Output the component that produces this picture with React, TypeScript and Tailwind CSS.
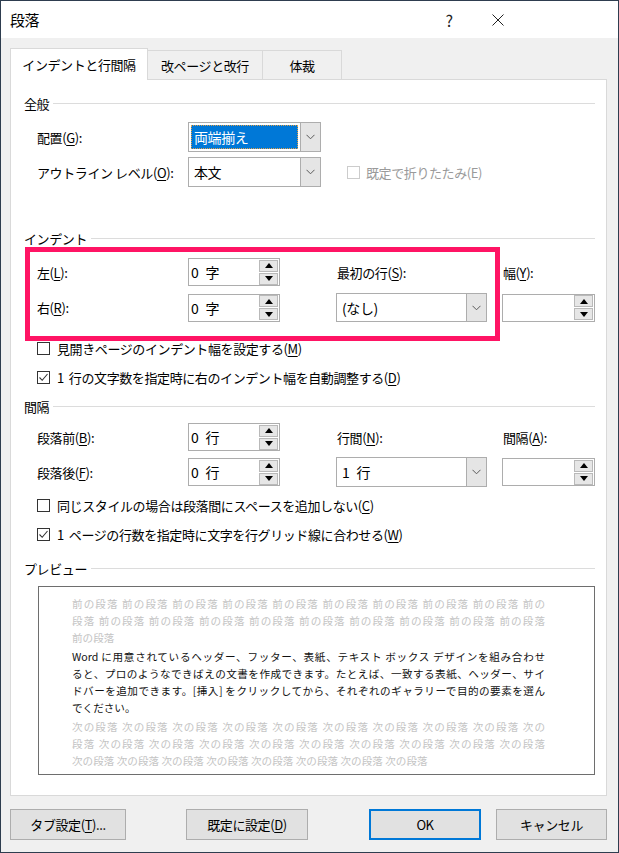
import React from "react";

const U = ({ c }: { c: string }) => (
  <span className="underline underline-offset-[2px] decoration-[1px]">{c}</span>
);

function Chevron() {
  return (
    <svg width="9" height="6" viewBox="0 0 9 6" className="block">
      <polyline points="0.5,0.8 4.5,4.8 8.5,0.8" fill="none" stroke="#5a5a5a" strokeWidth="1" />
    </svg>
  );
}

function Select({
  className,
  text,
  selected,
}: {
  className: string;
  text: React.ReactNode;
  selected?: boolean;
}) {
  return (
    <div className={"flex border border-[#adadad] bg-white " + className}>
      <div className="flex-1 flex p-[2px]">
        {selected ? (
          <div className="flex-1 flex items-center bg-[#0078d7] border border-dotted border-[#e2a04a] text-white text-[14px] pl-[2px]">
            {text}
          </div>
        ) : (
          <div className="flex-1 flex items-center text-[14px] pl-[3px]">{text}</div>
        )}
      </div>
      <div className="w-[20px] bg-[#e5e5e5] border-l border-[#adadad] flex items-center justify-center">
        <Chevron />
      </div>
    </div>
  );
}

function Tri({ up }: { up?: boolean }) {
  return (
    <svg width="8" height="5" viewBox="0 0 8 5" className="block">
      {up ? <polygon points="4,0 8,5 0,5" fill="#000" /> : <polygon points="0,0 8,0 4,5" fill="#000" />}
    </svg>
  );
}

function Spin({ className, num, unit }: { className: string; num?: string; unit?: string }) {
  return (
    <div className={"flex items-center border border-[#adadad] bg-white h-[28px] " + className}>
      <span className="flex-1 flex items-center gap-[7px] pl-[2px] text-[14px]">
        {num && <span>{num}</span>}
        {unit && <span>{unit}</span>}
      </span>
      <div className="flex flex-col gap-[1px] mr-[1px] w-[19px]">
        <div className="h-[12px] bg-[#e6e6e6] border border-[#b9b9b9] flex items-center justify-center">
          <Tri up />
        </div>
        <div className="h-[12px] bg-[#e6e6e6] border border-[#b9b9b9] flex items-center justify-center">
          <Tri />
        </div>
      </div>
    </div>
  );
}

function Check({
  checked,
  disabled,
  children,
  className,
}: {
  checked?: boolean;
  disabled?: boolean;
  children: React.ReactNode;
  className: string;
}) {
  return (
    <div className={"flex items-center h-[22px] pl-[26px] " + className}>
      <div
        className={
          disabled
            ? "w-[13px] h-[13px] border border-[#cccccc] bg-white"
            : "w-[13px] h-[13px] border border-[#333333] bg-white flex items-center justify-center"
        }
      >
        {checked && (
          <svg width="11" height="11" viewBox="0 0 11 11" className="block">
            <polyline points="1.5,5.5 4.2,8.3 9.5,2" fill="none" stroke="#333" strokeWidth="1.1" />
          </svg>
        )}
      </div>
      <span className={disabled ? "ml-[6px] text-[#9a9a9a]" : "ml-[7px]"}>{children}</span>
    </div>
  );
}

function Header({ title, className }: { title: string; className: string }) {
  return (
    <div className={"flex items-center h-[20px] pl-[13px] pr-[11px] " + className}>
      <span>{title}</span>
      <div className="flex-1 h-px bg-[#dcdcdc] ml-[4px]" />
    </div>
  );
}

const grayLine = "text-[#c4c4c4] whitespace-nowrap text-justify [text-align-last:justify]";
const mainLine = "text-[#111] whitespace-nowrap text-justify [text-align-last:justify]";

export default function App() {
  return (
    <div className="w-[619px] h-[853px] bg-[#f0f0f0] border border-[#2e3d4f] flex flex-col font-['Noto_Sans_CJK_JP','Noto_Sans',sans-serif] text-black text-[13px] leading-none overflow-hidden tracking-[-0.4px]">
      {/* Title bar */}
      <div className="h-[37px] bg-white flex items-center shrink-0">
        <span className="ml-[9px] text-[15px]">段落</span>
        <div className="ml-auto w-[46px] flex justify-center text-[16px] text-[#222]">?</div>
        <div className="ml-[3px] w-[46px] flex justify-center">
          <svg width="12" height="12" viewBox="0 0 12 12" className="block">
            <path d="M0.5 0.5 L11.5 11.5 M11.5 0.5 L0.5 11.5" stroke="#222" strokeWidth="1" />
          </svg>
        </div>
        <div className="w-[97px]" />
      </div>

      {/* Tabs */}
      <div className="flex items-end h-[31px] mt-[10px] ml-[9px] relative z-10">
        <div className="w-[138px] h-[32px] -mb-px bg-white border border-[#d9d9d9] border-b-0 flex items-center justify-center">
          インデントと行間隔
        </div>
        <div className="w-[115px] h-[29px] border border-l-0 border-b-0 border-[#d9d9d9] flex items-center justify-center">
          改ページと改行
        </div>
        <div className="w-[79px] h-[29px] border border-l-0 border-b-0 border-[#d9d9d9] flex items-center justify-center">
          体裁
        </div>
      </div>

      {/* Panel */}
      <div className="ml-[9px] w-[597px] h-[717px] border border-[#d9d9d9] bg-white flex flex-col">
        <Header title="全般" className="mt-[13px]" />
        <div className="flex items-center h-[30px] mt-[9px] pl-[26px]">
          <span className="w-[151px]">
            配置(<U c="G" />):
          </span>
          <Select className="w-[133px] h-[30px]" text="両端揃え" selected />
        </div>
        <div className="flex items-center h-[30px] mt-[5px] pl-[26px]">
          <span className="w-[151px]">
            アウトライン レベル(<U c="O" />):
          </span>
          <Select className="w-[133px] h-[30px]" text="本文" />
          <Check disabled className="pl-[15px]">
            既定で折りたたみ(E)
          </Check>
        </div>

        {/* Indent */}
        <div className="relative flex flex-col mt-[41px]">
          <Header title="インデント" className="" />
          <div className="flex items-center h-[28px] mt-[10px] pl-[26px]">
            <span className="w-[151px]">
              左(<U c="L" />):
            </span>
            <Spin className="w-[92px]" num="0" unit="字" />
            <span className="ml-[57px] w-[166px]">
              最初の行(<U c="S" />):
            </span>
            <span>
              幅(<U c="Y" />):
            </span>
          </div>
          <div className="flex items-center h-[29px] mt-[7px] pl-[26px]">
            <span className="w-[151px]">
              右(<U c="R" />):
            </span>
            <Spin className="w-[92px]" num="0" unit="字" />
            <Select className="ml-[56px] w-[151px] h-[29px]" text="(なし)" />
            <Spin className="ml-[15px] w-[93px]" />
          </div>
          <div className="absolute left-[14px] top-[19px] w-[475px] h-[94px] border-[5px] border-[#ff1464] pointer-events-none" />
        </div>
        <Check className="mt-[15px]">
          見開きページのインデント幅を設定する(<U c="M" />)
        </Check>
        <Check checked className="mt-[7px]">
          <span className="mr-[5px]">1</span>行の文字数を指定時に右のインデント幅を自動調整する(<U c="D" />)
        </Check>

        {/* Spacing */}
        <Header title="間隔" className="mt-[8px]" />
        <div className="flex items-center h-[28px] mt-[7px] pl-[26px]">
          <span className="w-[151px]">
            段落前(<U c="B" />):
          </span>
          <Spin className="w-[92px]" num="0" unit="行" />
          <span className="ml-[57px] w-[166px]">
            行間(<U c="N" />):
          </span>
          <span>
            間隔(<U c="A" />):
          </span>
        </div>
        <div className="flex items-center h-[30px] mt-[6px] pl-[26px]">
          <span className="w-[151px]">
            段落後(<U c="F" />):
          </span>
          <Spin className="w-[92px]" num="0" unit="行" />
          <Select
            className="ml-[56px] w-[151px] h-[30px]"
            text={
              <span className="flex gap-[7px]">
                <span>1</span>
                <span>行</span>
              </span>
            }
          />
          <Spin className="ml-[15px] w-[93px]" />
        </div>
        <Check className="mt-[7px]">
          同じスタイルの場合は段落間にスペースを追加しない(<U c="C" />)
        </Check>
        <Check checked className="mt-[7px]">
          <span className="mr-[5px]">1</span>ページの行数を指定時に文字を行グリッド線に合わせる(<U c="W" />)
        </Check>

        {/* Preview */}
        <Header title="プレビュー" className="mt-[13px]" />
        <div className="mt-[8px] ml-[27px] w-[557px] h-[189px] border border-[#6e6e6e] pt-[8px] pl-[33px] flex flex-col text-[10.6px] leading-[17px] tracking-normal">
          <div className="w-[473px]">
            <div className={grayLine}>前の段落 前の段落 前の段落 前の段落 前の段落 前の段落 前の段落 前の段落 前の段落 前の</div>
            <div className={grayLine}>段落 前の段落 前の段落 前の段落 前の段落 前の段落 前の段落 前の段落 前の段落 前の段落</div>
            <div className="text-[#c4c4c4]">前の段落</div>
            <div className="mt-[2px] mb-[2px]">
              <div className={mainLine}>Word に用意されているヘッダー、フッター、表紙、テキスト ボックス デザインを組み合わせ</div>
              <div className={mainLine}>ると、プロのようなできばえの文書を作成できます。たとえば、一致する表紙、ヘッダー、サイ</div>
              <div className={mainLine}>ドバーを追加できます。[挿入] をクリックしてから、それぞれのギャラリーで目的の要素を選ん</div>
              <div className="text-[#111]">でください。</div>
            </div>
            <div className={grayLine}>次の段落 次の段落 次の段落 次の段落 次の段落 次の段落 次の段落 次の段落 次の段落 次の</div>
            <div className={grayLine}>段落 次の段落 次の段落 次の段落 次の段落 次の段落 次の段落 次の段落 次の段落 次の段落</div>
            <div className="text-[#c4c4c4] whitespace-nowrap">次の段落 次の段落 次の段落 次の段落 次の段落 次の段落 次の段落 次の段落</div>
          </div>
        </div>
      </div>

      {/* Buttons */}
      <div className="flex mt-[13px] ml-[9px] h-[31px]">
        <div className="w-[116px] h-[31px] bg-[#e1e1e1] border border-[#adadad] flex items-center justify-center">
          タブ設定(<U c="T" />)...
        </div>
        <div className="ml-[60px] w-[122px] h-[31px] bg-[#e1e1e1] border border-[#adadad] flex items-center justify-center">
          既定に設定(<U c="D" />)
        </div>
        <div className="ml-[61px] w-[112px] h-[31px] bg-[#e1e1e1] border-2 border-[#0078d7] flex items-center justify-center">
          OK
        </div>
        <div className="ml-[15px] w-[111px] h-[31px] bg-[#e1e1e1] border border-[#adadad] flex items-center justify-center">
          キャンセル
        </div>
      </div>
    </div>
  );
}
